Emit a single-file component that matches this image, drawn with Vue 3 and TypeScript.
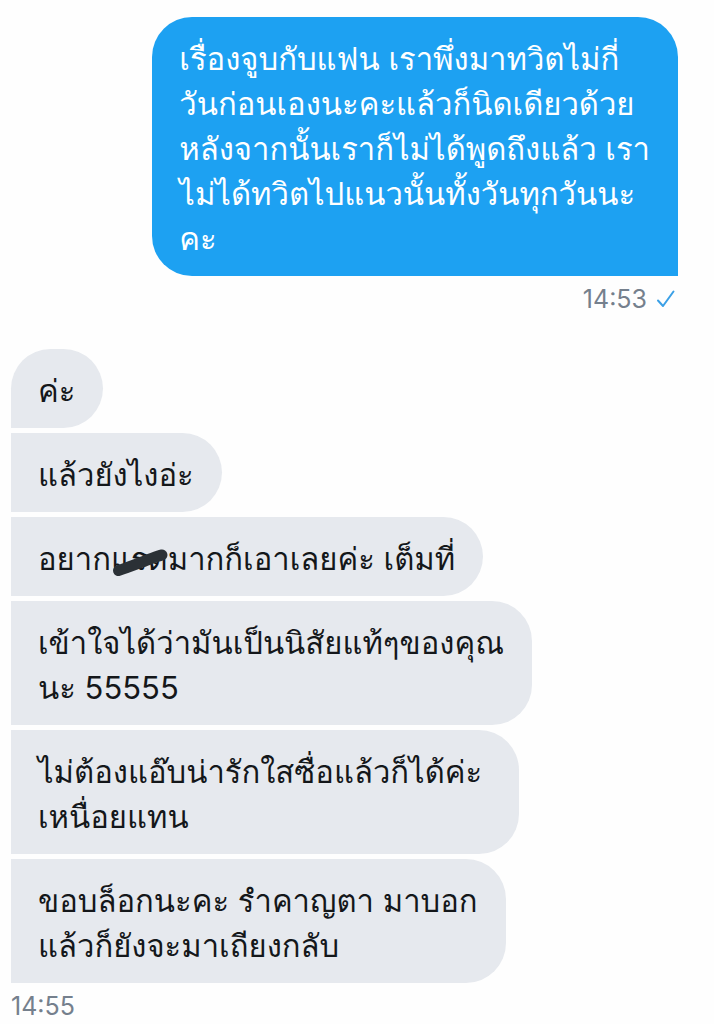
<script setup lang="ts">
interface Part {
  text: string
  scribbled?: boolean
}

interface Message {
  id: number
  lines: Part[][]
}

interface Group {
  side: 'sent' | 'received'
  time: string
  messages: Message[]
}

const plain = (text: string): Part[] => [{ text }]

const groups: Group[] = [
  {
    side: 'sent',
    time: '14:53',
    messages: [
      {
        id: 1,
        lines: [
          plain('เรื่องจูบกับแฟน เราพึ่งมาทวิตไม่กี่'),
          plain('วันก่อนเองนะคะแล้วก็นิดเดียวด้วย'),
          plain('หลังจากนั้นเราก็ไม่ได้พูดถึงแล้ว เรา'),
          plain('ไม่ได้ทวิตไปแนวนั้นทั้งวันทุกวันนะ'),
          plain('คะ'),
        ],
      },
    ],
  },
  {
    side: 'received',
    time: '14:55',
    messages: [
      { id: 2, lines: [plain('ค่ะ')] },
      { id: 3, lines: [plain('แล้วยังไงอ่ะ')] },
      {
        id: 4,
        lines: [[{ text: 'อยาก' }, { text: 'แรด', scribbled: true }, { text: 'มากก็เอาเลยค่ะ เต็มที่' }]],
      },
      { id: 5, lines: [plain('เข้าใจได้ว่ามันเป็นนิสัยแท้ๆของคุณ'), plain('นะ 55555')] },
      { id: 6, lines: [plain('ไม่ต้องแอ๊บน่ารักใสซื่อแล้วก็ได้ค่ะ '), plain('เหนื่อยแทน')] },
      { id: 7, lines: [plain('ขอบล็อกนะคะ รำคาญตา มาบอก'), plain('แล้วก็ยังจะมาเถียงกลับ')] },
    ],
  },
]
</script>

<template>
  <main class="chat">
    <section v-for="group in groups" :key="group.side" class="group" :class="group.side">
      <p v-for="message in group.messages" :key="message.id" class="bubble">
        <span v-for="(line, l) in message.lines" :key="l" class="line"><span
          v-for="(part, p) in line" :key="p" :class="{ scribbled: part.scribbled }"
        >{{ part.text }}<svg
          v-if="part.scribbled" class="scribble" viewBox="0 0 56 30" aria-hidden="true"
        ><path d="M6.500 23.500 C16 20.500 26 16.500 34 13.500 C40 11.500 45 9 50 8" /></svg></span></span>
      </p>
      <footer class="meta">
        <time>{{ group.time }}</time>
        <svg v-if="group.side === 'sent'" class="check" viewBox="0 0 20 20" role="img" aria-label="Sent">
          <path d="M2 11.500 L7 17 L17.500 2.500" />
        </svg>
      </footer>
    </section>
  </main>
</template>

<style scoped>
.chat {
  display: flex;
  flex-direction: column;
  gap: 32px;
  padding: 17px 36px 0 11px;
  font-family: Inter, Loma, "Noto Sans", sans-serif;
}

.group {
  display: flex;
  flex-direction: column;
  align-items: flex-start;
  gap: 5px;
}

.sent {
  align-items: flex-end;
}

.bubble {
  margin: 0;
  padding: 19px 28px 15px 27px;
  border-radius: 0 40px 40px 0;
  background: #e6e9ee;
  color: #14171a;
  font-size: 31px;
  line-height: 45px;
}

.received .bubble:first-child {
  border-top-left-radius: 40px;
}

.sent .bubble {
  border-radius: 40px 40px 0 40px;
  background: #1da1f2;
  color: #fff;
}

.line {
  display: block;
  white-space: pre;
}

.scribbled {
  position: relative;
}

.scribble {
  position: absolute;
  left: 1px;
  top: 7px;
  width: 56px;
  height: 30px;
  overflow: visible;
}

.scribble path {
  fill: none;
  stroke: #2b3136;
  stroke-width: 11;
  stroke-linecap: round;
}

.meta {
  display: flex;
  align-items: center;
  gap: 9px;
  color: #75808d;
  font-size: 25px;
  line-height: 36px;
}

.sent .meta {
  padding-right: 2px;
}

.check {
  width: 20px;
  height: 20px;
}

.check path {
  fill: none;
  stroke: #3ba0e6;
  stroke-width: 2;
  stroke-linecap: round;
  stroke-linejoin: round;
}
</style>

<style>
body {
  background: #fefefe;
}
</style>
